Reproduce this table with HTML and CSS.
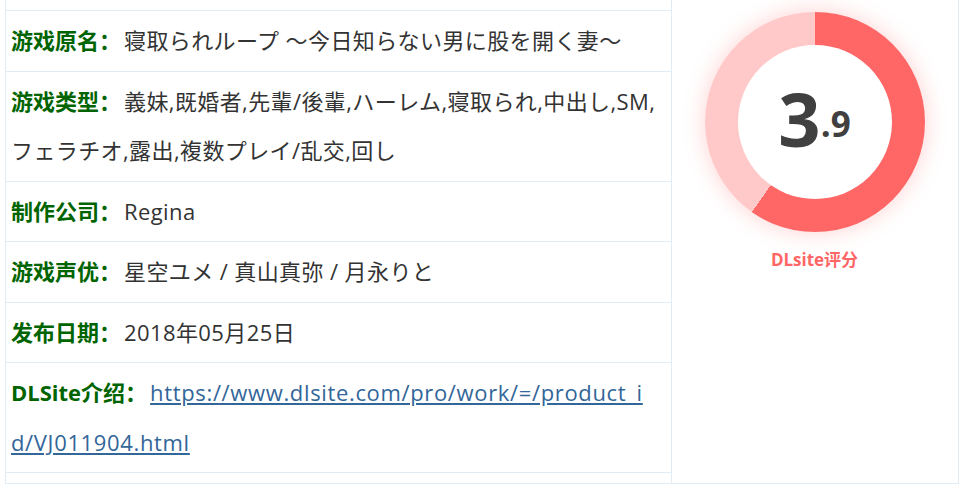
FILE: index.html
```html
<!DOCTYPE html>
<html lang="zh-CN">
<head>
<meta charset="utf-8">
<title>游戏信息</title>
<link rel="stylesheet" href="styles.css">
</head>
<body>
<div class="info">
  <div class="details">
    <div class="rows">
      <div class="row"><b class="label">游戏原名：</b><span class="value">寝取られループ ～今日知らない男に股を開く妻～</span></div>
      <div class="row"><b class="label">游戏类型：</b><span class="value">義妹,既婚者,先輩/後輩,ハーレム,寝取られ,中出し,SM,フェラチオ,露出,複数プレイ/乱交,回し</span></div>
      <div class="row"><b class="label">制作公司：</b><span class="value">Regina</span></div>
      <div class="row"><b class="label">游戏声优：</b><span class="value">星空ユメ / 真山真弥 / 月永りと</span></div>
      <div class="row"><b class="label">发布日期：</b><span class="value">2018年05月25日</span></div>
      <div class="row"><b class="label">DLSite介绍：</b><a class="link" href="#">https://www.dlsite.com/pro/work/=/product_id/VJ011904.html</a></div>
    </div>
  </div>
  <div class="score">
    <div class="ring">
      <div class="ring-inner"><span class="big">3</span><span class="small">.9</span></div>
    </div>
    <div class="score-label">DLsite评分</div>
  </div>
</div>
</body>
</html>
```
FILE: styles.css
```css
html, body {
  margin: 0;
  padding: 0;
  background: #fff;
}
body {
  font-family: "Open Sans", "Noto Sans CJK SC", sans-serif;
}
.info {
  margin-left: 5px;
  width: 952px;
  display: grid;
  grid-template-columns: 666px 285px;
  border: 1px solid #e1ecf7;
  border-top: none;
}
.details {
  border-right: 1px solid #e1ecf7;
  padding: 10px 0;
}
.rows {
  border-top: 1px solid #e1ecf7;
}
.row {
  border-bottom: 1px solid #e1ecf7;
  padding: 5px 15px 5px 5px;
  font-size: 22px;
  line-height: 49.5px;
  color: #333;
}
.label {
  color: #006400;
  font-weight: 700;
  margin-right: 3px;
}
.value {
  letter-spacing: 0.4px;
}
.link {
  color: #336699;
  text-decoration: underline;
  word-break: break-all;
  letter-spacing: 0.65px;
}
.score {
  display: flex;
  flex-direction: column;
  align-items: center;
  padding-top: 12px;
}
.ring {
  width: 220px;
  height: 220px;
  border-radius: 50%;
  background: conic-gradient(#ff6666 0deg 215deg, #ffc9c9 215deg 360deg);
  box-shadow: 0 0 22px rgba(255, 102, 102, 0.3);
  display: flex;
  align-items: center;
  justify-content: center;
}
.ring-inner {
  width: 154px;
  height: 154px;
  border-radius: 50%;
  background: #fff;
  display: flex;
  align-items: baseline;
  justify-content: center;
  color: #404040;
  font-weight: 700;
  font-family: "Open Sans", sans-serif;
  line-height: 1;
  padding-top: 37px;
  box-sizing: border-box;
}
.big {
  font-size: 74px;
}
.small {
  font-size: 35px;
  position: relative;
  top: -10px;
}
.score-label {
  margin-top: 17px;
  color: #ff6666;
  font-weight: 700;
  font-size: 17px;
  line-height: 22px;
}
```
